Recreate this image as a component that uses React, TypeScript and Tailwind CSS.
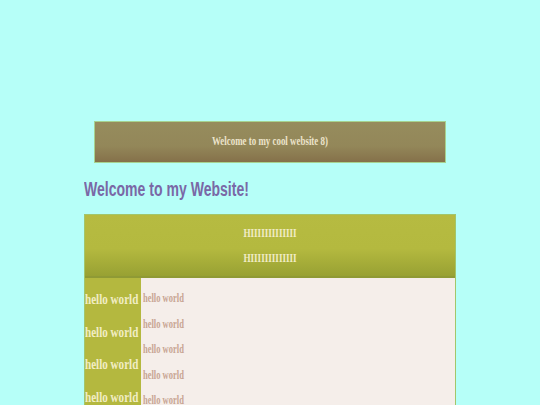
import React from "react";

const serif = { fontFamily: '"Liberation Serif", "Times New Roman", serif' };

export default function App() {
  const left = ["hello world", "hello world", "hello world", "hello world"];
  const right = ["hello world", "hello world", "hello world", "hello world", "hello world"];
  return (
    <div className="h-[405px] overflow-hidden bg-[#b6fff8] pt-[121px]">
      <div className="ml-[94px] flex h-[42px] w-[352px] items-center justify-center border border-[#a6d28f] bg-linear-to-b from-[#968c5d] via-[#938759] via-60% to-[#85714a] pb-[3px]">
        <span
          className="inline-block origin-center scale-x-[0.66] text-[13.5px] font-bold leading-none text-[#ece4cb]"
          style={serif}
        >
          Welcome to my cool website 8)
        </span>
      </div>
      <h1
        className="ml-[84px] mt-[14px] origin-left scale-x-[0.72] whitespace-nowrap text-[19.5px] font-bold leading-[24px] text-[#7a68a6]"
        style={{ fontFamily: '"Liberation Sans", Arial, sans-serif' }}
      >
        Welcome to my Website!
      </h1>
      <div className="ml-[84px] mt-[13px] w-[372px] border border-[#a2c66b]">
        <div
          className="flex h-[63px] flex-col items-center border-b-2 border-[#8f9a35] bg-linear-to-b from-[#b6bb41] via-[#b4b93f] via-55% to-[#98a133] pt-[6px]"
          style={serif}
        >
          <span className="inline-block origin-center scale-x-[0.76] text-[12px] font-bold leading-[25px] text-[#f1ecc6]">
            HIIIIIIIIIIIII
          </span>
          <span className="inline-block origin-center scale-x-[0.76] text-[12px] font-bold leading-[25px] text-[#f1ecc6]">
            HIIIIIIIIIIIII
          </span>
        </div>
        <div className="flex h-[200px]">
          <div className="w-[56px] shrink-0 bg-[#b4b83f] pt-[5px]" style={serif}>
            {left.map((t, i) => (
              <div
                key={i}
                className="origin-left scale-x-[0.74] whitespace-nowrap text-[15px] font-bold leading-[32.5px] text-[#f1edc4]"
              >
                {t}
              </div>
            ))}
          </div>
          <div className="flex-1 bg-[#f5eeea] pl-[2px] pt-[8px]" style={serif}>
            {right.map((t, i) => (
              <div
                key={i}
                className="origin-left scale-x-[0.74] whitespace-nowrap text-[11.5px] font-bold leading-[25.5px] text-[#c8a593]"
              >
                {t}
              </div>
            ))}
          </div>
        </div>
      </div>
    </div>
  );
}
